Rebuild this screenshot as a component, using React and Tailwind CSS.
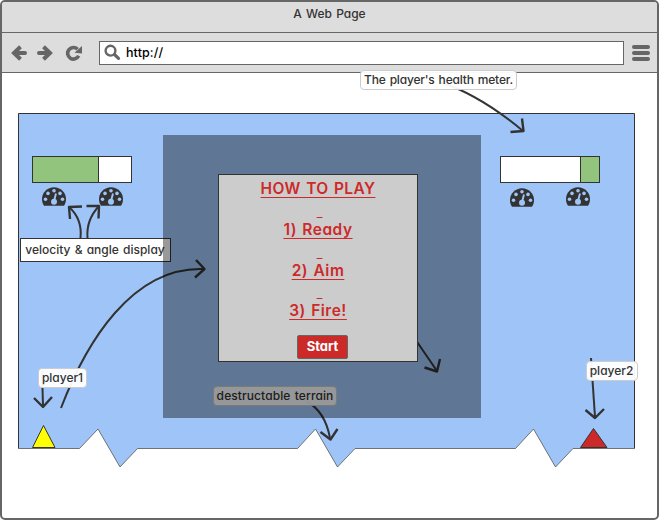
import React from "react";

const INK = "#333333";

function Gauge({ x, y }) {
  return (
    <g transform={`translate(${x} ${y})`}>
      <path d="M2 18.700C.7 17 0 14.600 0 12.300a12 12 0 0 1 24 0c0 2.300-.7 4.700-2 6.400z" fill={INK} />
      <g fill="#9fc5f8">
        <circle cx="3.500" cy="12.300" r="1.800" />
        <circle cx="6" cy="6.400" r="1.800" />
        <circle cx="12" cy="3.800" r="1.800" />
        <circle cx="18" cy="6.400" r="1.800" />
        <circle cx="20.500" cy="12.300" r="1.800" />
        <circle cx="12" cy="14.700" r="3" />
      </g>
      <path d="M12 14L13.800 7.200" stroke="#9fc5f8" strokeWidth="1.900" strokeLinecap="round" />
    </g>
  );
}

function Arrow({ line, head }) {
  return (
    <g fill="none" stroke={INK} strokeWidth="2" strokeLinecap="butt" strokeLinejoin="round">
      <path d={line} />
      <path d={head} strokeWidth="2.400" />
    </g>
  );
}

function Label({ className, children }) {
  return (
    <div className={`absolute flex h-5 items-center justify-center whitespace-nowrap rounded-[4px] border border-[#cccccc] bg-white/95 ${className}`}>
      {children}
    </div>
  );
}

function Toolbar() {
  return (
    <div className="flex h-10 shrink-0 items-center border-b border-[#666] bg-[#dddddd] pl-[9px] pr-[7px]">
      <svg width="17" height="16" viewBox="0 0 17 16" fill="none" stroke="#666" strokeWidth="4" strokeLinejoin="miter">
        <path d="M14 8H4" strokeLinecap="round" />
        <path d="M9.500 1.800L3 8l6.500 6.200" />
      </svg>
      <svg className="ml-2" width="17" height="16" viewBox="0 0 17 16" fill="none" stroke="#666" strokeWidth="4" strokeLinejoin="miter">
        <path d="M3 8h10" strokeLinecap="round" />
        <path d="M7.500 1.800L14 8l-6.500 6.200" />
      </svg>
      <svg className="ml-3" width="18" height="16" viewBox="0 0 18 16">
        <path d="M12.600 4.200A5.800 5.800 0 1 0 13.700 10.800" fill="none" stroke="#666" strokeWidth="3.600" />
        <path d="M17 1v7.500L9.500 7.800z" fill="#666" />
      </svg>
      <div className="ml-[16px] flex h-6 grow items-center border border-[#666] bg-white pl-1">
        <svg width="17" height="17" viewBox="0 0 17 17" fill="none" stroke="#666">
          <circle cx="6.500" cy="6.700" r="4.900" strokeWidth="2.400" />
          <path d="M10.500 10.500l4 3.800" strokeWidth="3.200" strokeLinecap="round" />
        </svg>
        <span className="ml-[5px] pt-px text-[12.500px] tracking-[0.100px] text-black">http://</span>
      </div>
      <div className="ml-2 flex w-[18px] flex-col gap-0.5">
        <span className="h-1 rounded-full bg-[#666]" />
        <span className="h-1 rounded-full bg-[#666]" />
        <span className="h-1 rounded-full bg-[#666]" />
      </div>
    </div>
  );
}

function Scene() {
  return (
    <svg className="absolute inset-0" width="659" height="520" viewBox="0 0 659 520">
      <path
        d="M18.500 448.500V113.500H634.500V448.500H573L555.500 467L533.500 429L515.500 448.500H355L337.500 467L315.500 429L297.500 448.500H137.500L120 467L98 429L79.500 448.500Z"
        fill="#9fc5f8"
      />
      <path d="M18.500 448.500V113.500H634.500V448.500" fill="none" stroke={INK} />
      <path
        d="M18.500 448.500H79.500L98 429L120 467L137.500 448.500H297.500L315.500 429L337.500 467L355 448.500H515.500L533.500 429L555.500 467L573 448.500H634.500"
        fill="none"
        stroke="#555"
        strokeWidth="0.800"
      />
      <g stroke={INK}>
        <rect x="32.500" y="156.500" width="99" height="26" fill="#fff" />
        <rect x="32.500" y="156.500" width="66" height="26" fill="#93c47d" />
        <rect x="500.500" y="156.500" width="99" height="26" fill="#fff" />
        <rect x="580.500" y="156.500" width="19" height="26" fill="#93c47d" />
        <path d="M32.500 447.500L43.500 425.500L55 447.500Z" fill="#ffff00" strokeLinejoin="round" />
        <path d="M580.500 447.500L593.500 428.500L607 447.500Z" fill="#cc2a29" strokeLinejoin="round" />
      </g>
      <Gauge x={42} y={187} />
      <Gauge x={99} y={187} />
      <Gauge x={510} y={188} />
      <Gauge x={566} y={187} />
      <Arrow line="M440 82Q480 95 523 131" head="M522 118.500L523.500 131L510.500 132" />
      <Arrow line="M80.500 238Q82.500 219 69 207" head="M82 206.500L69 207L70 219" />
      <Arrow line="M87.500 238Q86 220 99 206" head="M86.500 206L99 206L98.500 218.500" />
      <Arrow line="M61 408C86 343 132 266 204 269" head="M196 260L204.500 269L195 277.500" />
      <Arrow line="M42 371L43 406" head="M34 398L43 407L52 397" />
      <Arrow line="M591 358L595 417" head="M585.500 410L595 418L604 409" />
      <Arrow line="M306 401Q325 411 330 438" head="M320.500 432L330.500 439.500L337.500 429" />
      <Arrow line="M400 317L437 371" head="M424.500 367.500L437 371.500L440 359" />
    </svg>
  );
}

function Step({ children }) {
  return (
    <>
      <div className="h-5 pl-[3px] tracking-[0.800px] underline underline-offset-2">&nbsp;</div>
      <div className="h-[20.500px] tracking-[0.500px] underline">{children}</div>
    </>
  );
}

function HowToPlay() {
  return (
    <div className="absolute left-[218px] top-[174px] flex h-[188px] w-[200px] flex-col items-center border border-[#333] bg-[#cccccc] pt-1 text-[15.500px] font-semibold leading-[20px] text-[#cc2a29] decoration-1 underline-offset-[3px]">
      <div className="h-[21px] whitespace-pre tracking-[0.400px] underline">HOW TO PLAY</div>
      <Step>1) Ready</Step>
      <Step>2) Aim</Step>
      <Step>3) Fire!</Step>
      <button className="ml-[9px] mt-[13px] flex h-6 w-[51px] shrink-0 items-center justify-center rounded-[2px] border border-[#666] bg-[#cc2a29] pb-px text-[13px] font-bold text-white">
        Start
      </button>
    </div>
  );
}

export default function App() {
  return (
    <div className="relative h-[520px] w-[659px] overflow-hidden bg-white font-[Inter,'Liberation_Sans',sans-serif] text-[12px] font-medium text-[#333] [font-feature-settings:'cv11'] [word-spacing:1px]">
      <div className="flex h-full flex-col overflow-hidden rounded-[5px] border-2 border-[#666]">
        <div className="flex h-[31px] shrink-0 items-center justify-center border-b border-[#666] bg-[#dddddd] pb-[6px]">A Web Page</div>
        <Toolbar />
      </div>
      <Scene />
      <Label className="left-[360px] top-[70px] w-[157px] tracking-[-0.180px]">The player's health meter.</Label>
      <div className="absolute left-[20px] top-[238px] flex h-6 w-[151px] items-center justify-center whitespace-nowrap border border-[#333] bg-white pr-px">
        velocity &amp; angle display
      </div>
      <Label className="left-[38px] top-[368px] w-[49px]">player1</Label>
      <Label className="left-[586px] top-[361px] w-[52px] pr-px">player2</Label>
      <Label className="left-[213px] top-[386px] w-[124px] tracking-[0.100px]">destructable terrain</Label>
      <div className="absolute left-[163px] top-[135px] h-[283px] w-[318px] bg-black/40" />
      <HowToPlay />
    </div>
  );
}
